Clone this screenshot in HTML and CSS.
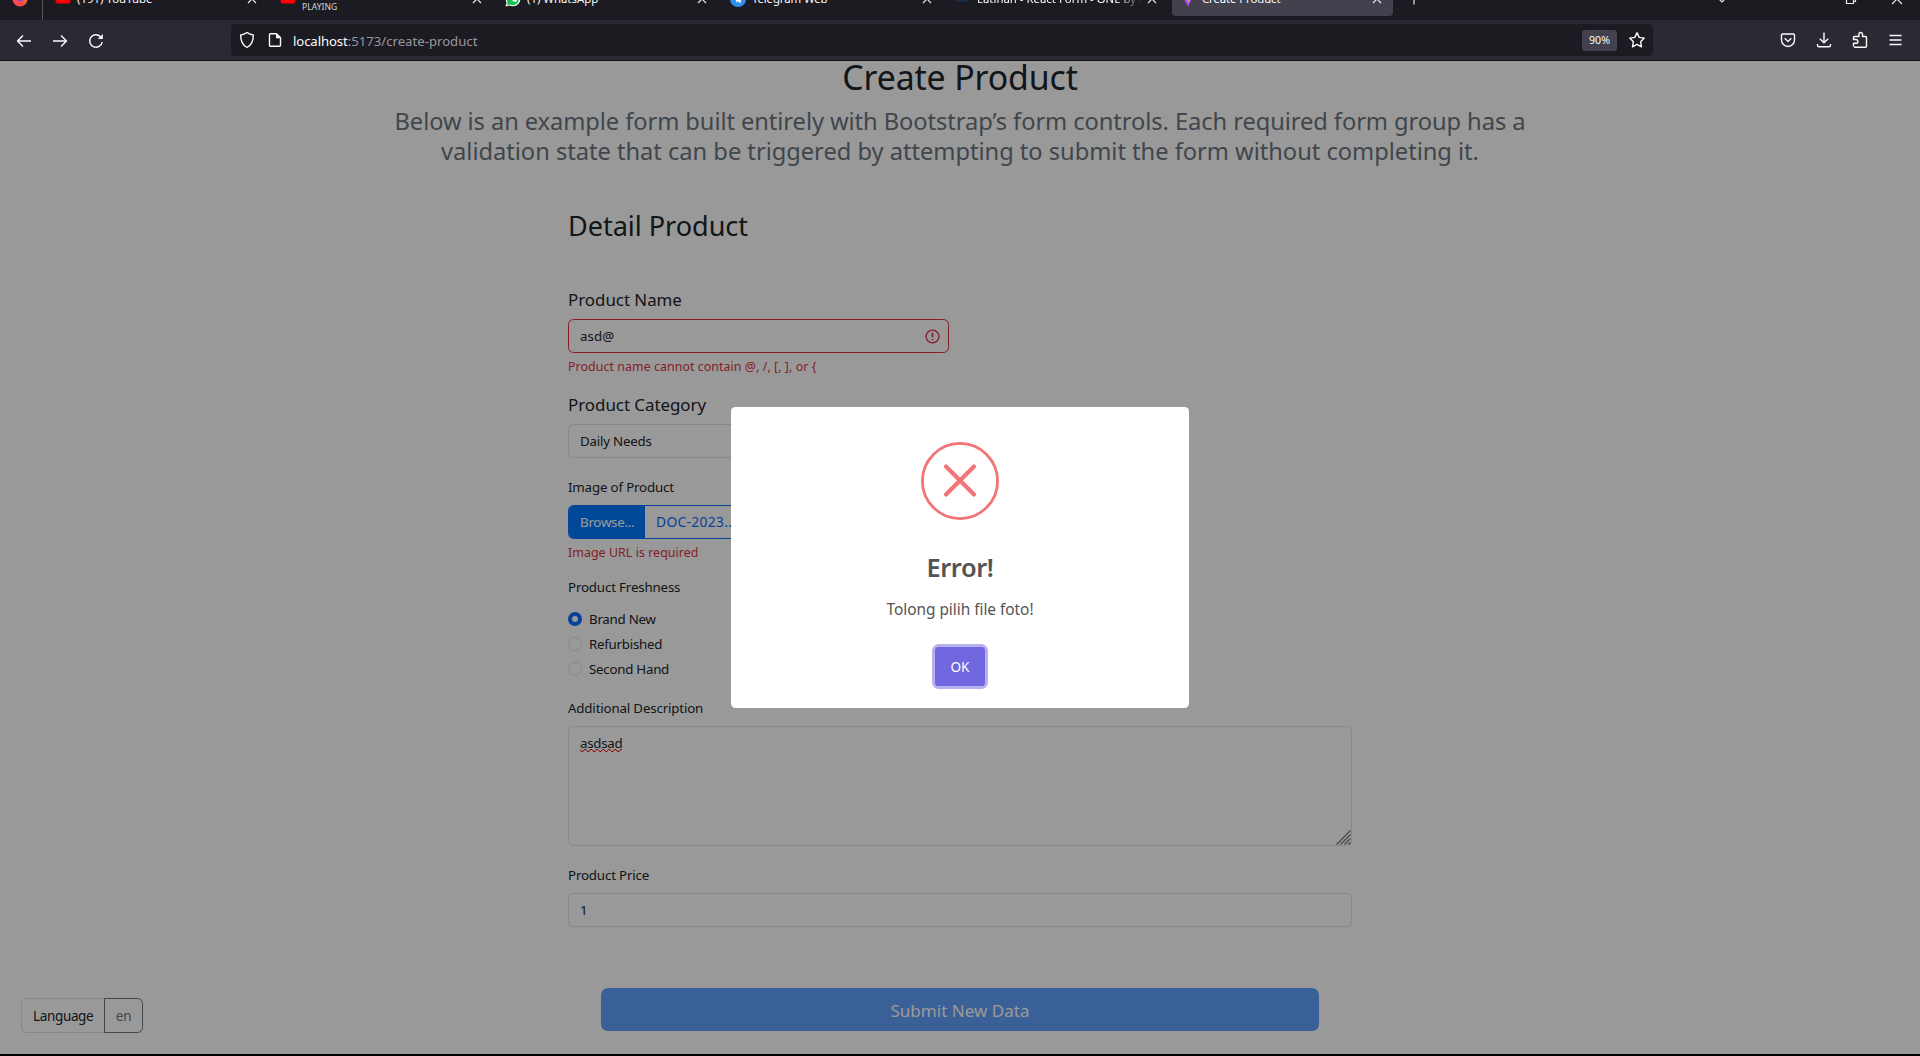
FILE: index.html
```html
<!DOCTYPE html>
<html lang="en">
<head>
<meta charset="utf-8">
<title>Create Product</title>
<link rel="stylesheet" href="styles.css">
</head>
<body>
<div class="window">
  <div class="tabstrip">
    <div class="fxview">
      <svg width="16" height="16" viewBox="0 0 16 16"><defs><linearGradient id="fx" x1="0" y1="1" x2="1" y2="0"><stop offset="0" stop-color="#ff3b6b"/><stop offset=".5" stop-color="#ff4f3d"/><stop offset="1" stop-color="#ffb02e"/></linearGradient></defs><circle cx="8" cy="8" r="7.5" fill="url(#fx)"/><circle cx="8.3" cy="6.5" r="3.8" fill="#8a3fe0"/></svg>
    </div>
    <div class="tab">
      <svg class="fav" width="16" height="16" viewBox="0 0 16 16"><rect x="0.5" y="2.5" width="15" height="11" rx="2.8" fill="#f00"/><path d="M6.5 5.5v5l4-2.5z" fill="#fff"/></svg>
      <span class="title">(191) YouTube</span>
      <svg class="x" width="10" height="10" viewBox="0 0 10 10"><path d="M1 1l8 8M9 1L1 9"/></svg>
    </div>
    <div class="tab">
      <svg class="fav" width="16" height="16" viewBox="0 0 16 16"><rect x="0.5" y="2.5" width="15" height="11" rx="2.8" fill="#f00"/><path d="M6.5 5.5v5l4-2.5z" fill="#fff"/></svg>
      <span class="title media"><span class="playing">PLAYING</span></span>
      <svg class="x" width="10" height="10" viewBox="0 0 10 10"><path d="M1 1l8 8M9 1L1 9"/></svg>
    </div>
    <div class="tab">
      <svg class="fav low" width="16" height="16" viewBox="0 0 16 16"><path d="M0.5 15.5l1-4A7.4 7.4 0 1 1 4.6 14.500z" fill="#fff"/><path d="M1.8 14.200l.8-3A6.200 6.200 0 1 1 5 13.400z" fill="#12c150"/><path d="M5.500 4.500c-1 1 0 3.200 1.700 4.800 1.700 1.600 3.500 2.200 4.400 1.200l.3-1-1.900-1-.9 1C8 9 7 8 6.500 6.900l.7-.8-.6-1.800z" fill="#fff"/></svg>
      <span class="title">(1) WhatsApp</span>
      <svg class="x" width="10" height="10" viewBox="0 0 10 10"><path d="M1 1l8 8M9 1L1 9"/></svg>
    </div>
    <div class="tab">
      <svg class="fav low" width="16" height="16" viewBox="0 0 16 16"><circle cx="8" cy="8" r="8" fill="#2f8fea"/><path d="M3.500 7.800l8.500-3.500-1.500 7.900-2.800-2-1.400 1.300-.3-2.300z" fill="#fff"/></svg>
      <span class="title tight">Telegram Web</span>
      <svg class="x" width="10" height="10" viewBox="0 0 10 10"><path d="M1 1l8 8M9 1L1 9"/></svg>
    </div>
    <div class="tab">
      <svg class="fav" width="16" height="16" viewBox="0 0 16 16"><path d="M1 11.500l3-2 2 2 2-2 2 2 3-2" fill="none" stroke="#1c2f4d" stroke-width="1.500"/></svg>
      <span class="title fade">Latihan - React Form - ONE by Next</span>
      <svg class="x" width="10" height="10" viewBox="0 0 10 10"><path d="M1 1l8 8M9 1L1 9"/></svg>
    </div>
    <div class="tab active">
      <svg class="fav low" width="16" height="16" viewBox="0 0 16 16"><path d="M1 2.500L8 15.500 14.500 2.500 8 3.700z" fill="#a94bff"/><path d="M9 1L6.500 8.500h2L8 12l3.500-5.500h-2L11 1z" fill="#ffc83d"/></svg>
      <span class="title tight">Create Product</span>
      <svg class="x" width="10" height="10" viewBox="0 0 10 10"><path d="M1 1l8 8M9 1L1 9"/></svg>
    </div>
    <svg class="plus" width="14" height="14" viewBox="0 0 14 14"><path d="M7 .5v13M.5 7h13"/></svg>
    <div class="winbtns">
      <svg width="12" height="12" viewBox="0 0 12 12"><path d="M2 5l4 4 4-4"/></svg>
      <svg width="12" height="12" viewBox="0 0 12 12"><path d="M1.500 3.500h7v7h-7zM3.500 3V1.500h7v7H9"/></svg>
      <svg width="12" height="12" viewBox="0 0 12 12"><path d="M1 1l10 10M11 1L1 11"/></svg>
    </div>
  </div>

  <div class="toolbar">
    <div class="nav">
      <svg width="16" height="16" viewBox="0 0 16 16"><path d="M15 8H1.500M7 2.500L1.500 8 7 13.500"/></svg>
      <svg width="16" height="16" viewBox="0 0 16 16"><path d="M1 8h13.500M9 2.500L14.500 8 9 13.500"/></svg>
      <svg width="16" height="16" viewBox="0 0 16 16"><path d="M14.200 9A6.300 6.300 0 1 1 12.300 3.400L14 5"/><path d="M14.800 1v5H9.800z" fill="#fbfbfe" stroke="none"/></svg>
    </div>
    <div class="urlbar">
      <svg width="16" height="18" viewBox="0 0 16 18"><path d="M8 1.500c2 1.600 4 2.300 6.300 2.500.2 5.300-1.500 9.800-6.300 12.500C3.200 13.800 1.500 9.300 1.700 4 4 3.800 6 3.100 8 1.500z"/></svg>
      <svg class="doc" width="14" height="16" viewBox="0 0 14 16"><path d="M2.500 1.700h6l4 4v7.600a1 1 0 0 1-1 1h-9a1 1 0 0 1-1-1V2.700a1 1 0 0 1 1-1z"/><path d="M8 1.500v4.800h4.800z" fill="#fbfbfe" stroke="none"/></svg>
      <span class="url"><b>localhost</b>:5173/create-product</span>
      <span class="zoom">90%</span>
      <svg width="18" height="18" viewBox="0 0 18 18"><path d="M9 1.700l2.200 4.700 5.100.7-3.700 3.600.9 5.200L9 13.400l-4.500 2.500.9-5.200L1.700 7.100l5.100-.7z"/></svg>
    </div>
    <div class="tools">
      <svg width="16" height="16" viewBox="0 0 16 16"><path d="M2.500 2h11a1 1 0 0 1 1 1v5a6.500 6.500 0 0 1-13 0V3a1 1 0 0 1 1-1z"/><path d="M4.700 6.300L8 9.400l3.300-3.100"/></svg>
      <svg width="16" height="16" viewBox="0 0 16 16"><path d="M8 .5v10M3.800 6.800L8 10.800l4.200-4M1.500 12v1.300a1.500 1.500 0 0 0 1.500 1.500h10a1.500 1.500 0 0 0 1.500-1.500V12"/></svg>
      <svg width="16" height="18" viewBox="0 0 16 18"><path d="M2 16.300h11.500a1 1 0 0 0 1-1V6.500a1 1 0 0 0-1-1h-3V3.300a1.800 1.800 0 0 0-3.600 0v2.200H2.500a1 1 0 0 0-1 1v2H4a1.900 1.900 0 0 1 0 3.800H1.500v3.200"/></svg>
      <svg width="16" height="16" viewBox="0 0 16 16"><path d="M1.500 3.500h12M1.500 8h12M1.500 12.500h12"/></svg>
    </div>
  </div>

  <div class="viewport">
    <header class="intro">
      <h1>Create Product</h1>
      <p>Below is an example form built entirely with Bootstrap’s form controls. Each required form group has a<br><span class="second">validation state that can be triggered by attempting to submit the form without completing it.</span></p>
    </header>
    <div class="form">
      <h2>Detail Product</h2>
      <label class="big name">Product Name</label>
      <div class="control half invalid"><span>asd@</span>
        <svg width="15" height="15" viewBox="0 0 15 15"><circle cx="7.500" cy="7.500" r="6.400"/><path d="M7.500 3.700v4.600M7.500 10v1.300" stroke-width="1.700"/></svg>
      </div>
      <div class="feedback">Product name cannot contain @, /, [, ], or {</div>
      <label class="big cat">Product Category</label>
      <div class="control select">Daily Needs</div>
      <label class="image">Image of Product</label>
      <div class="file"><span class="browse">Browse...</span><span class="fname">DOC-2023...</span></div>
      <div class="feedback wide">Image URL is required</div>
      <label class="fresh">Product Freshness</label>
      <div class="radios">
        <div><i class="dot on"></i>Brand New</div>
        <div><i class="dot"></i>Refurbished</div>
        <div><i class="dot"></i>Second Hand</div>
      </div>
      <label class="desc">Additional Description</label>
      <div class="control area"><span class="typo">asdsad</span>
        <svg class="squiggle" width="42" height="3" viewBox="0 0 42 3"><path d="M0 .5l1.500 2h1.500l1.500-2h1.500l1.500 2H9l1.500-2H12l1.500 2H15l1.500-2H18l1.500 2H21l1.500-2H24l1.500 2H27l1.500-2H30l1.500 2H33l1.500-2H36l1.500 2H39l1.500-2H42"/></svg>
        <svg class="grip" width="15" height="15" viewBox="0 0 15 15"><path d="M.5 14.500l14-14M4.500 14.500l10-10M8.500 14.500l6-6M12.500 14.500l2-2"/></svg>
      </div>
      <label class="price">Product Price</label>
      <div class="control one">1</div>
      <div class="submit">Submit New Data</div>
    </div>
    <div class="lang"><span class="l">Language</span><span class="e">en</span></div>

    <div class="overlay">
      <div class="modal">
        <svg class="err" width="78" height="78" viewBox="0 0 78 78"><circle cx="39" cy="39" r="37.600" stroke-width="2.800"/><path d="M25 24.500l28 28M53 24.500l-28 28" stroke-width="4.200" stroke-linecap="round"/></svg>
        <div class="mtitle">Error!</div>
        <div class="mtext">Tolong pilih file foto!</div>
        <div class="ok">OK</div>
      </div>
    </div>
  </div>
</div>
</body>
</html>
```
FILE: styles.css
```css
* { box-sizing: border-box; }
body { margin: 0; background: #000; font-family: "Noto Sans", "Open Sans", sans-serif; overflow: hidden; }
h1, h2, p { margin: 0; font-weight: 400; }
.window { width: 1920px; height: 1056px; display: flex; flex-direction: column; overflow: hidden; }

/* tab strip, scrolled partly out of the top */
.tabstrip { flex: none; height: 20px; background: #1c1b22; display: flex; align-items: flex-end; overflow: hidden; color: #fbfbfe; }
.fxview { width: 43px; height: 40px; border-right: 1px solid #55545c; padding: 10px 0 0 12px; margin-right: 4px; }
.tab { width: 221px; height: 36px; margin: 0 4px 4px 0; padding: 0 11px 0 8px; display: flex; align-items: center; border-radius: 4px; font-size: 11.400px; line-height: 16px; }
.tab.active { background: #42414d; }
.fav { flex: none; margin-right: 6px; }
.fav.low { margin-top: 2px; }
.title { flex: 1; white-space: nowrap; overflow: hidden; padding-top: 2px; }
.title.tight { letter-spacing: -.1px; }
.title.fade { -webkit-mask-image: linear-gradient(90deg, #000 82%, transparent 98%); mask-image: linear-gradient(90deg, #000 82%, transparent 98%); }
.title.media { height: 36px; padding-top: 18px; }
.playing { font-size: 8.500px; letter-spacing: .05px; color: #d5d5dc; }
.x, .plus, .winbtns svg { fill: none; stroke: #e8e8ee; stroke-width: 1.200; flex: none; }
.x { margin-top: 1px; }
.plus { margin: 0 0 15px 10px; }
.winbtns { margin: 0 17px 15px auto; display: flex; gap: 34px; }
.winbtns svg:first-child { margin-right: 83px; }

/* navigation toolbar */
.toolbar { flex: none; height: 41px; background: #2b2a33; border-bottom: 1px solid #0f0e13; display: flex; align-items: center; }
.toolbar svg { fill: none; stroke: #fbfbfe; stroke-width: 1.400; stroke-linejoin: round; flex: none; }
.nav { width: 231px; padding: 1px 0 0 16px; display: flex; gap: 20px; }
.urlbar { width: 1422px; height: 32px; border-radius: 4px; background: #1c1b22; display: flex; align-items: center; padding: 0 7px 0 8px; }
.doc { margin-left: 13px; }
.url { flex: 1; margin-left: 11px; font-size: 13.160px; line-height: 20px; color: #98979f; padding-top: 1px; }
.url b { font-weight: 400; color: #fbfbfe; letter-spacing: -.1px; }
.zoom { width: 35px; height: 21px; margin-right: 11px; border-radius: 3px; background: #42414d; color: #fbfbfe; font-size: 10.600px; line-height: 21px; text-align: center; }
.tools { margin-left: 127px; display: flex; gap: 20px; align-items: center; }

/* page */
.viewport { position: relative; flex: none; height: 993px; background: #fff; color: #212529; overflow: hidden; font-size: 13.300px; letter-spacing: -.16px; }
.intro { text-align: center; margin-top: -4px; white-space: nowrap; }
h1 { font-size: 33.840px; line-height: 40px; letter-spacing: -.12px; }
.intro p { margin-top: 9px; font-size: 23.690px; line-height: 30px; letter-spacing: -.08px; color: #6c757d; }
.second { letter-spacing: -.03px; }
.form { width: 784px; margin: 43px auto 0; display: flex; flex-direction: column; white-space: nowrap; }
h2 { font-size: 27.070px; line-height: 34px; letter-spacing: -.03px; }
label { display: block; line-height: 22px; }
label.big { font-size: 16.920px; line-height: 26px; letter-spacing: -.03px; }
label.name { margin: 44px 0 6px; }
label.cat { margin: 15px 0 6px; }
label.image { margin: 18px 0 7px; }
label.fresh { margin: 13px 0 9px; }
label.desc { margin: 15px 0 7px; }
label.price { margin: 18px 0 7px; }
.control { height: 34px; border: 1px solid #dee2e6; border-radius: 5.400px; padding: 0 11px; line-height: 32px; }
.half { width: 381px; }
.select { width: 381px; letter-spacing: -.2px; }
.invalid { border-color: #dc3545; display: flex; align-items: center; justify-content: space-between; padding-right: 8px; letter-spacing: .07px; }
.invalid svg { fill: none; stroke: #dc3545; stroke-width: 1.400; }
.feedback { margin-top: 3px; font-size: 12.400px; line-height: 21px; letter-spacing: .06px; color: #dc3545; }
.file { width: 381px; height: 34px; border: 1px solid #0d6efd; border-radius: 5.400px; overflow: hidden; display: flex; line-height: 32px; color: #0d6efd; }
.browse { width: 76px; padding-left: 11px; background: #007bff; color: #fff; letter-spacing: -.25px; }
.fname { padding-left: 11px; font-size: 13.800px; letter-spacing: .32px; }
.radios div { height: 25px; display: flex; align-items: center; line-height: 25px; letter-spacing: -.25px; }
.dot { width: 14px; height: 14px; margin: -1px 7px 0 0; border: 1px solid #dee2e6; border-radius: 50%; }
.dot.on { border: 4px solid #0d6efd; }
.area { position: relative; height: 120px; padding: 5px 11px; line-height: 22px; }
.squiggle { position: absolute; left: 11px; top: 22px; fill: none; stroke: #e00000; stroke-width: 1; }
.typo { letter-spacing: -.27px; }
.grip { position: absolute; right: 0; bottom: 0; fill: none; stroke: #777; stroke-width: 1.200; }
.submit { width: 718px; height: 43px; margin: 61px auto 0; border-radius: 7px; background: #61a1fe; color: #fff; font-size: 17px; letter-spacing: .03px; line-height: 45px; text-align: center; }
.lang { position: absolute; left: 21px; top: 937px; height: 35px; display: flex; line-height: 35px; font-size: 13.500px; }
.lang .l { width: 83px; border: 1px solid #dee2e6; border-right: 0; border-radius: 5.400px 0 0 5.400px; padding-left: 11px; letter-spacing: -.35px; }
.lang .e { width: 39px; border: 1px solid #6c757d; border-radius: 0 5.400px 5.400px 0; color: #6c757d; text-align: center; }

/* dialog */
.overlay { position: absolute; inset: 0; background: rgba(0, 0, 0, .4); display: flex; align-items: center; justify-content: center; }
.modal { width: 458px; height: 301px; border-radius: 4.500px; background: #fff; padding-top: 35px; display: flex; flex-direction: column; align-items: center; color: #545454; letter-spacing: 0; }
.err { flex: none; fill: none; stroke: #f27474; }
.mtitle { margin-top: 27px; font-size: 25.400px; font-weight: 600; line-height: 40px; letter-spacing: -.4px; }
.mtext { margin-top: 10px; font-size: 15.400px; line-height: 26px; letter-spacing: -.02px; }
.ok { width: 50px; height: 39px; margin-top: 24px; border-radius: 3.600px; background: #7066e0; box-shadow: 0 0 0 3px #b7b2ef; color: #fff; font-size: 13.600px; line-height: 39px; text-align: center; }
```
